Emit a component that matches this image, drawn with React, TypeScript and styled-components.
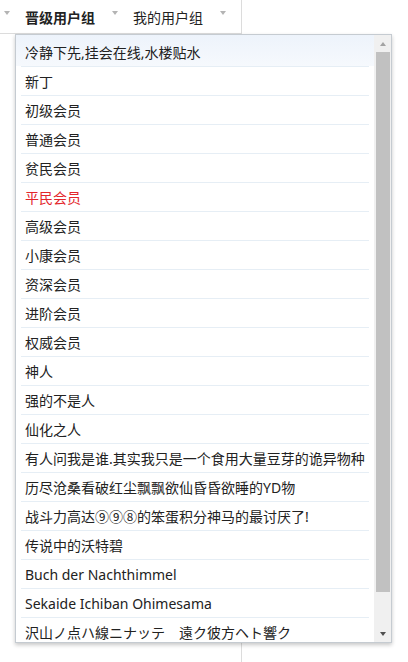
import styled, { createGlobalStyle } from "styled-components";

const GlobalStyle = createGlobalStyle`
  html, body {
    margin: 0;
    padding: 0;
    background: #fff;
  }
  body {
    font-family: "Noto Sans", "Noto Sans CJK SC", sans-serif;
    color: #222;
  }
`;

interface GroupItem {
  name: string;
  highlight?: boolean;
}

const groups: GroupItem[] = [
  { name: "冷静下先,挂会在线,水楼贴水" },
  { name: "新丁" },
  { name: "初级会员" },
  { name: "普通会员" },
  { name: "贫民会员" },
  { name: "平民会员", highlight: true },
  { name: "高级会员" },
  { name: "小康会员" },
  { name: "资深会员" },
  { name: "进阶会员" },
  { name: "权威会员" },
  { name: "神人" },
  { name: "强的不是人" },
  { name: "仙化之人" },
  { name: "有人问我是谁.其实我只是一个食用大量豆芽的诡异物种" },
  { name: "历尽沧桑看破红尘飘飘欲仙昏昏欲睡的YD物" },
  { name: "战斗力高达⑨⑨⑧的笨蛋积分神马的最讨厌了!" },
  { name: "传说中的沃特碧" },
  { name: "Buch der Nachthimmel" },
  { name: "Sekaide Ichiban Ohimesama" },
  { name: "沢山ノ点ハ線ニナッテ　遠ク彼方ヘト響ク" },
];

const Page = styled.div`
  position: relative;
  width: 408px;
  height: 662px;
  overflow: hidden;
`;

const Panel = styled.div`
  width: 241px;
  height: 662px;
  border-right: 1px solid #dcdcdc;
`;

const TabBar = styled.div`
  display: flex;
  align-items: center;
  height: 33px;
  padding-left: 4px;
  border-bottom: 1px solid #dcdcdc;
`;

const Tab = styled.div`
  display: flex;
  align-items: center;
  margin-left: 15px;
`;

const TabLabel = styled.span<{ $active?: boolean }>`
  font-family: "Noto Sans CJK SC", sans-serif;
  font-size: 14px;
  font-weight: ${(p) => (p.$active ? 700 : 400)};
  color: #222;
  line-height: 20px;
`;

const Caret = styled.span<{ $gap?: number }>`
  width: 0;
  height: 0;
  margin-left: ${(p) => p.$gap ?? 0}px;
  margin-top: -7px;
  border-left: 3.5px solid transparent;
  border-right: 3.5px solid transparent;
  border-top: 4px solid #b4b4b4;
`;

const Dropdown = styled.div`
  position: absolute;
  left: 15px;
  top: 34px;
  width: 375px;
  height: 607px;
  display: flex;
  background: #fff;
  border: 1px solid #c5cbd1;
  box-shadow: 0 2px 4px rgba(0, 0, 0, 0.22);
`;

const List = styled.ul`
  flex: 1;
  margin: 0;
  padding: 3px 5px 0 5px;
  list-style: none;
  overflow: hidden;
  /* hover tint on the first entry */
  background: linear-gradient(to bottom, #edf3fb 0, #f6f9fd 31px, #fff 31px);
`;

const Row = styled.li<{ $red?: boolean }>`
  display: flex;
  align-items: center;
  height: 28px;
  padding-left: 4px;
  border-bottom: 1px solid #e6eef5;
  font-size: 14px;
  white-space: nowrap;
  color: ${(p) => (p.$red ? "#e3262b" : "#222")};
`;

const Scrollbar = styled.div`
  width: 17px;
  display: flex;
  flex-direction: column;
  background: #f0f0f0;
`;

const ScrollButton = styled.div`
  height: 17px;
  display: flex;
  align-items: center;
  justify-content: center;
`;

const ArrowUp = styled.span`
  width: 0;
  height: 0;
  border-left: 3.5px solid transparent;
  border-right: 3.5px solid transparent;
  border-bottom: 4px solid #a3a3a3;
`;

const ArrowDown = styled.span`
  width: 0;
  height: 0;
  border-left: 3.5px solid transparent;
  border-right: 3.5px solid transparent;
  border-top: 4px solid #505050;
`;

const Track = styled.div`
  flex: 1;
  display: flex;
  flex-direction: column;
  align-items: center;
`;

const Thumb = styled.div`
  width: 14px;
  background: #c1c1c1;
`;

export default function App() {
  const thumbHeight = 540;

  return (
    <Page>
      <GlobalStyle />
      <Panel>
        <TabBar>
          <Caret />
          <Tab>
            <TabLabel $active>晋级用户组</TabLabel>
            <Caret $gap={17} />
          </Tab>
          <Tab>
            <TabLabel>我的用户组</TabLabel>
            <Caret $gap={17} />
          </Tab>
        </TabBar>
      </Panel>
      <Dropdown>
        <List>
          {groups.map((g) => (
            <Row key={g.name} $red={g.highlight}>
              {g.name}
            </Row>
          ))}
        </List>
        <Scrollbar>
          <ScrollButton>
            <ArrowUp />
          </ScrollButton>
          <Track>
            <Thumb style={{ height: thumbHeight }} />
          </Track>
          <ScrollButton>
            <ArrowDown />
          </ScrollButton>
        </Scrollbar>
      </Dropdown>
    </Page>
  );
}
